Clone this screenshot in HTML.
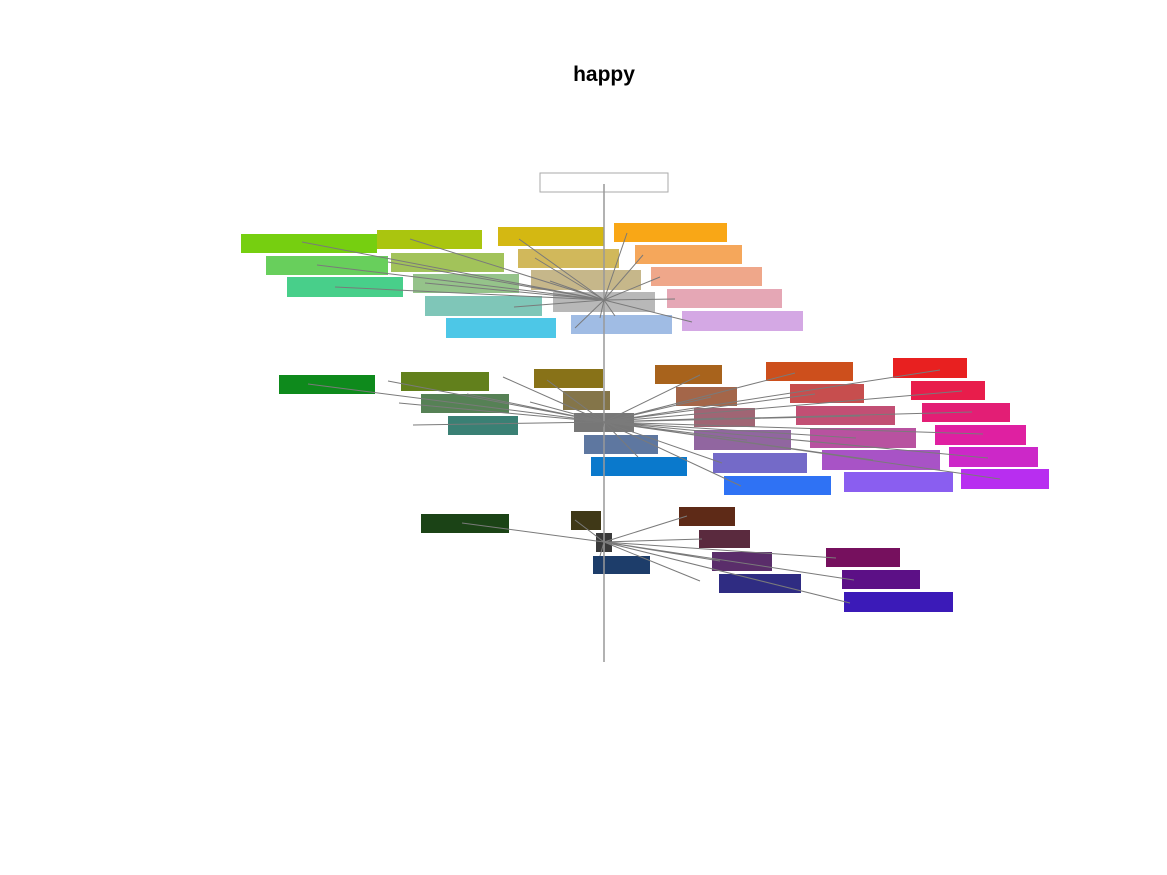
<!DOCTYPE html>
<html><head><meta charset="utf-8"><style>html,body{margin:0;padding:0;background:#fff;}svg{display:block}</style></head>
<body>
<svg width="1167" height="875" viewBox="0 0 1167 875" xmlns="http://www.w3.org/2000/svg">
<text x="604" y="81" text-anchor="middle" font-family="Liberation Sans, sans-serif" font-weight="bold" font-size="21" fill="#000">happy</text>
<g stroke="none">
<rect x="540" y="173" width="128" height="19" fill="#fff" stroke="#aaa" stroke-width="1"/>
<rect x="241" y="234" width="136" height="19" fill="#76cf10"/>
<rect x="377" y="230" width="105" height="19" fill="#aac50f"/>
<rect x="498" y="227" width="106" height="19" fill="#d4b812"/>
<rect x="614" y="223" width="113" height="19" fill="#f9a716"/>
<rect x="266" y="256" width="122" height="19" fill="#68cf5c"/>
<rect x="391" y="253" width="113" height="19" fill="#a2c35a"/>
<rect x="518" y="249" width="101" height="19" fill="#d1b85b"/>
<rect x="635" y="245" width="107" height="19" fill="#f5a75b"/>
<rect x="287" y="277" width="116" height="20" fill="#48cf8a"/>
<rect x="413" y="274" width="106" height="19" fill="#95c38a"/>
<rect x="531" y="270" width="110" height="20" fill="#c6b78a"/>
<rect x="651" y="267" width="111" height="19" fill="#efa78a"/>
<rect x="553" y="292" width="102" height="20" fill="#b8b8b8"/>
<rect x="425" y="296" width="117" height="20" fill="#7fc6b8"/>
<rect x="667" y="289" width="115" height="19" fill="#e5a7b5"/>
<rect x="446" y="318" width="110" height="20" fill="#4dc7e7"/>
<rect x="571" y="315" width="101" height="19" fill="#a0bce4"/>
<rect x="682" y="311" width="121" height="20" fill="#d4a8e4"/>

<rect x="279" y="375" width="96" height="19" fill="#0e8a1c"/>
<rect x="401" y="372" width="88" height="19" fill="#62801c"/>
<rect x="421" y="394" width="88" height="19" fill="#568155"/>
<rect x="448" y="416" width="70" height="19" fill="#3a8074"/>
<rect x="534" y="369" width="69" height="19" fill="#887218"/>
<rect x="563" y="391" width="47" height="19" fill="#847549"/>
<rect x="574" y="413" width="60" height="19" fill="#777777"/>
<rect x="584" y="435" width="74" height="19" fill="#5e77a0"/>
<rect x="591" y="457" width="96" height="19" fill="#0a79cc"/>
<rect x="655" y="365" width="67" height="19" fill="#a8631c"/>
<rect x="676" y="387" width="61" height="19" fill="#a46649"/>
<rect x="694" y="408" width="61" height="19" fill="#a06574"/>
<rect x="694" y="430" width="97" height="20" fill="#9166a0"/>
<rect x="713" y="453" width="94" height="20" fill="#746ac8"/>
<rect x="724" y="476" width="107" height="19" fill="#2f72f4"/>
<rect x="766" y="362" width="87" height="19" fill="#cd4f1c"/>
<rect x="790" y="384" width="74" height="19" fill="#c74e4e"/>
<rect x="796" y="406" width="99" height="19" fill="#c24f74"/>
<rect x="810" y="428" width="106" height="20" fill="#b852a0"/>
<rect x="822" y="450" width="118" height="20" fill="#a853c6"/>
<rect x="844" y="472" width="109" height="20" fill="#8a5ef0"/>
<rect x="893" y="358" width="74" height="20" fill="#e82020"/>
<rect x="911" y="381" width="74" height="19" fill="#e81d4b"/>
<rect x="922" y="403" width="88" height="19" fill="#e31e75"/>
<rect x="935" y="425" width="91" height="20" fill="#df20a1"/>
<rect x="949" y="447" width="89" height="20" fill="#cc28c8"/>
<rect x="961" y="469" width="88" height="20" fill="#b82ef0"/>

<rect x="421" y="514" width="88" height="19" fill="#1b4316"/>
<rect x="571" y="511" width="30" height="19" fill="#3f3817"/>
<rect x="596" y="533" width="16" height="19" fill="#3a3a3a"/>
<rect x="593" y="556" width="57" height="18" fill="#1d3d6a"/>
<rect x="679" y="507" width="56" height="19" fill="#5e2a17"/>
<rect x="699" y="530" width="51" height="18" fill="#5a2a3e"/>
<rect x="712" y="552" width="60" height="19" fill="#5a2d6a"/>
<rect x="719" y="574" width="82" height="19" fill="#2f2c82"/>
<rect x="826" y="548" width="74" height="19" fill="#76105e"/>
<rect x="842" y="570" width="78" height="19" fill="#5c1086"/>
<rect x="844" y="592" width="109" height="20" fill="#3b1ab8"/>
</g>
<g stroke="#7a7a7a" stroke-width="1" fill="none">
<line x1="604" y1="184" x2="604" y2="662" stroke="#999" stroke-width="1.5"/>
<path d="M604 300L302 242M604 300L410 239M604 300L519 239M604 300L627 233M604 300L317 265M604 300L388 262M604 300L535 258M604 300L643 255M604 300L335 287M604 300L425 283M604 300L550 281M604 300L660 277M604 300L514 307M604 300L675 299M604 300L615 316M604 300L600 318M604 300L692 322M604 300L575 328"/>
<path d="M604 422L308 384M604 422L388 381M604 422L399 403M604 422L413 425M604 422L467 394M604 422L503 377M604 422L530 402M604 422L603 427M604 422L638 457M604 422L547 380M604 422L557 401M604 422L700 375M604 422L711 397M604 422L724 418M604 422L747 440M604 422L722 463M604 422L741 486M604 422L795 373M604 422L815 394M604 422L860 416M604 422L856 438M604 422L873 460M604 422L940 370M604 422L962 391M604 422L972 412M604 422L983 434M604 422L988 458M604 422L1000 479"/>
<path d="M604 542L462 523M604 542L575 520M604 542L600 556M604 542L687 516M604 542L702 539M604 542L720 561M604 542L700 581M604 542L836 558M604 542L854 580M604 542L850 603"/>
</g>
</svg>
</body></html>
